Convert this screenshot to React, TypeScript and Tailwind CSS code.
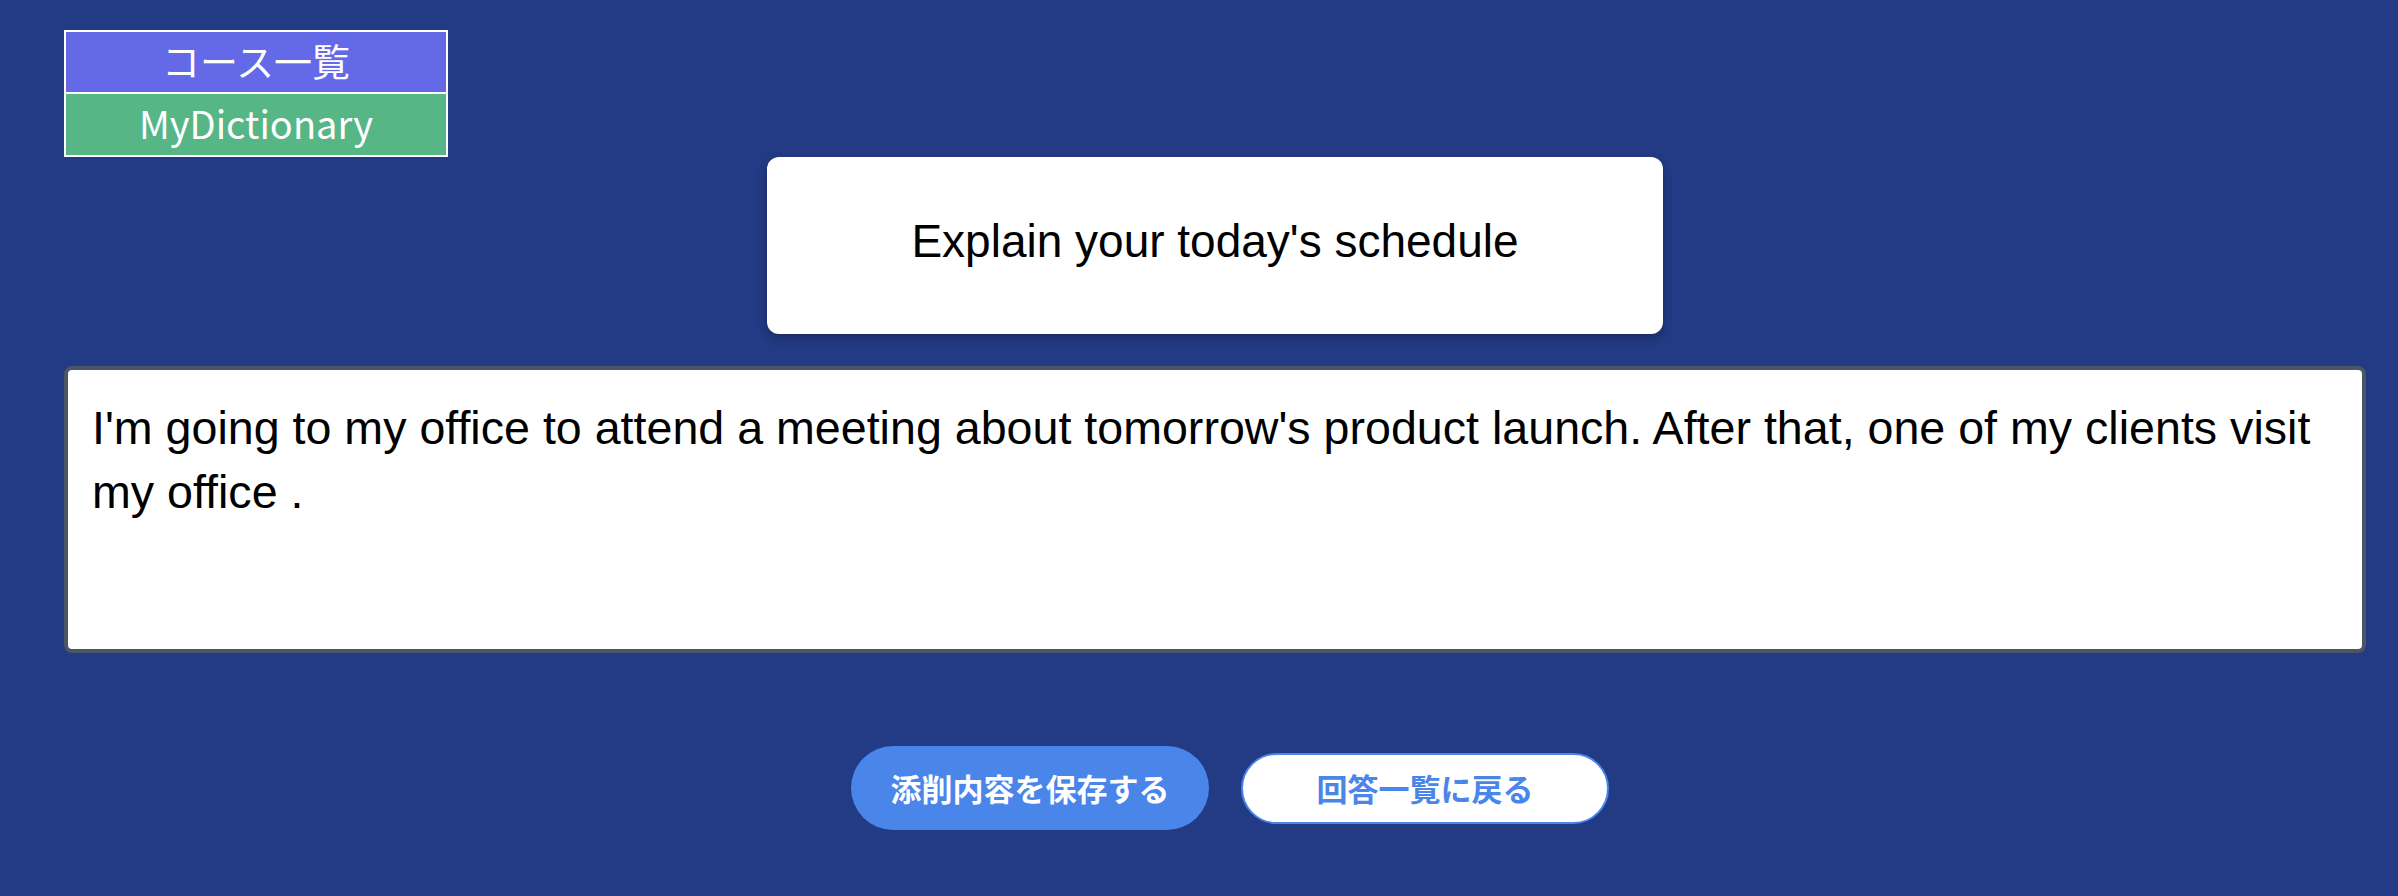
import React from "react";

const answer =
  "I'm going to my office to attend a meeting about tomorrow's product launch. After that, one of my clients visit my office .";

export default function App() {
  return (
    <div className="min-h-[896px] w-full bg-[#233a84] pt-[30px] font-['Liberation_Sans',Arial,sans-serif]">
      <nav className="ml-[64px] w-[384px] font-['Noto_Sans_CJK_JP',sans-serif] text-[38px] leading-none text-white">
        <a className="flex h-[64px] items-center justify-center border-2 border-white bg-[#6469e8] pb-[4px]">
          コース一覧
        </a>
        <a className="flex h-[63px] items-center justify-center border-2 border-t-0 border-white bg-[#56b686] pb-[4px]">
          MyDictionary
        </a>
      </nav>

      <div className="ml-[64px] mr-[32px]">
        <div className="mx-auto flex h-[177px] w-[896px] items-center justify-center rounded-[12px] bg-white pb-[9px] shadow-[0_4px_10px_rgba(0,0,0,0.25)]">
          <h1 className="text-[46px] text-black">Explain your today's schedule</h1>
        </div>

        <textarea
          className="mt-[32px] block h-[287px] w-full resize-none rounded-[8px] border-[4px] border-[#4b5563] bg-white px-[24px] pt-[26px] text-[46.6px] leading-[64px] text-black outline-none"
          defaultValue={answer}
          readOnly
        />

        <div className="mt-[93px] flex items-center justify-center gap-[32px] pl-[30px] font-['Noto_Sans_CJK_JP',sans-serif] font-bold">
          <button className="h-[84px] w-[358px] rounded-full bg-[#4a85ea] text-[31px] text-white">
            添削内容を保存する
          </button>
          <button className="h-[71px] w-[368px] rounded-full border-2 border-[#4a85ea] bg-white text-[31px] text-[#4a85ea]">
            回答一覧に戻る
          </button>
        </div>
      </div>
    </div>
  );
}
